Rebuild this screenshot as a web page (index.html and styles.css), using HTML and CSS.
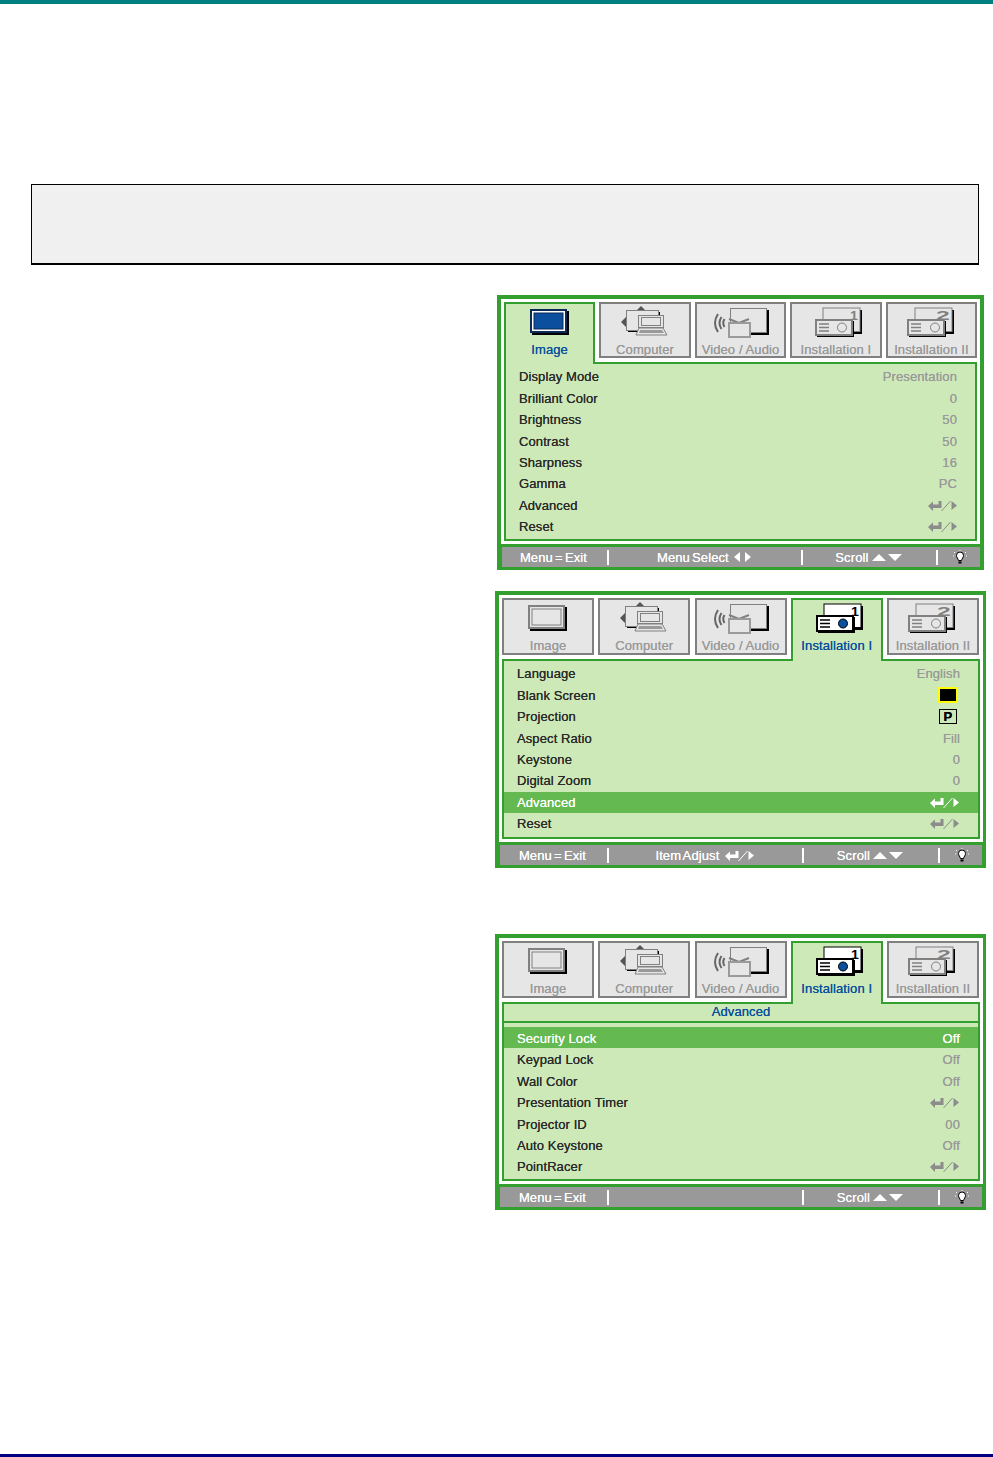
FILE: index.html
```html
<!DOCTYPE html>
<html lang="en">
<head>
<meta charset="utf-8">
<title>Projector OSD menus</title>
<link rel="stylesheet" href="styles.css">
</head>
<body>
<svg class="defs" aria-hidden="true">
  <symbol id="i-image" viewBox="2 2 88 38">
    <rect x="28" y="9" width="37" height="24" fill="#000"/>
    <rect class="ln" x="27" y="8" width="35" height="22"/>
    <rect class="scr" x="30" y="11" width="29" height="16"/>
  </symbol>
  <symbol id="i-computer" viewBox="2 2 88 38">
    <path class="sh" d="M38 8l4-4 4 4zM27 15v10l-5-5z"/>
    <rect x="29" y="10" width="32" height="20" fill="#000"/>
    <rect class="thin" x="27.500" y="8.500" width="32" height="20"/>
    <rect class="thin2" x="39.500" y="13.500" width="25" height="12"/>
    <rect class="thin" x="42.500" y="15.500" width="19" height="8"/>
    <path class="base" d="M40 26h24l4 7H37z"/>
    <path class="base2" d="M41 28h22l2 3H40z"/>
  </symbol>
  <symbol id="i-video" viewBox="2 2 88 38">
    <rect x="37" y="8" width="37" height="25" fill="#000"/>
    <rect class="thin" x="35.500" y="6.500" width="36" height="24"/>
    <path class="wave" d="M23 12q-6 9 0 18M26.500 15q-4 6 0 12M29.500 17q-2.500 4 0 8"/>
    <path class="ant" d="M34 17l10 4 10-4"/>
    <rect class="tv" x="34" y="21" width="21" height="14"/>
  </symbol>
  <symbol id="i-inst1" viewBox="2 2 88 38">
    <rect x="35" y="8" width="37" height="24" fill="#000"/>
    <rect class="thin" x="33" y="6" width="37" height="23.500"/>
    <text class="num" x="60" y="18" textLength="8" lengthAdjust="spacingAndGlyphs">1</text>
    <rect x="27" y="19" width="37" height="16" fill="#000"/>
    <rect class="box" x="26" y="18" width="36" height="15"/>
    <path class="bars" d="M29 22h10M29 25.500h10M29 29h10"/>
    <circle class="lens" cx="52" cy="25.500" r="4.500"/>
  </symbol>
  <symbol id="i-inst2" viewBox="2 2 88 38">
    <rect x="31" y="8" width="37" height="24" fill="#000"/>
    <rect class="thin" x="29" y="6" width="37" height="23.500"/>
    <text class="num" x="50" y="18" textLength="14" lengthAdjust="spacingAndGlyphs">2</text>
    <rect x="23" y="19" width="37" height="16" fill="#000"/>
    <rect class="box" x="22" y="18" width="36" height="15"/>
    <path class="bars" d="M25 22h10M25 25.500h10M25 29h10"/>
    <circle class="lens" cx="49" cy="25.500" r="4.500"/>
  </symbol>
  <symbol id="i-enter" viewBox="0 0 29 11">
    <path class="ef" d="M0 6l5-4.500v3h5.500V1h3v7H5v3zM23.500 1l5.500 4.500-5.500 4.500z"/>
    <path class="es" d="M13.500 11L22.500 1"/>
  </symbol>
  <symbol id="i-bulb" viewBox="0 0 14 16">
    <path d="M3.500 5.500a3.500 3.500 0 0 1 7 0c0 2-1.500 3-2 5h-3c-.5-2-2-3-2-5z" fill="#fff" stroke="#000" stroke-width="1"/>
    <path d="M5.500 11.500h3v2h-3z" fill="#000"/>
    <path d="M7 0v1M1 2l1 1M13 2l-1 1M0 6h1M13 6h1" stroke="#fff" stroke-width="1"/>
  </symbol>
</svg>

<div class="topbar"></div>
<div class="notice"></div>

<main class="menus">
  <section class="menu menu-a">
    <div class="tabs">
      <div class="tab active"><svg class="icon"><use href="#i-image"/></svg><span>Image</span></div>
      <div class="tab"><svg class="icon"><use href="#i-computer"/></svg><span>Computer</span></div>
      <div class="tab"><svg class="icon"><use href="#i-video"/></svg><span>Video / Audio</span></div>
      <div class="tab"><svg class="icon"><use href="#i-inst1"/></svg><span>Installation I</span></div>
      <div class="tab"><svg class="icon"><use href="#i-inst2"/></svg><span>Installation II</span></div>
    </div>
    <div class="panel">
      <div class="row"><span>Display Mode</span><span class="val">Presentation</span></div>
      <div class="row"><span>Brilliant Color</span><span class="val">0</span></div>
      <div class="row"><span>Brightness</span><span class="val">50</span></div>
      <div class="row"><span>Contrast</span><span class="val">50</span></div>
      <div class="row"><span>Sharpness</span><span class="val">16</span></div>
      <div class="row"><span>Gamma</span><span class="val">PC</span></div>
      <div class="row"><span>Advanced</span><svg class="enter"><use href="#i-enter"/></svg></div>
      <div class="row"><span>Reset</span><svg class="enter"><use href="#i-enter"/></svg></div>
    </div>
    <div class="foot">
      <div class="cell first">Menu = Exit</div>
      <div class="cell">Menu Select <span class="tri tri-l"></span><span class="tri tri-r"></span></div>
      <div class="cell">Scroll <span class="tri tri-u"></span><span class="tri tri-d"></span></div>
      <div class="cell last"><svg class="bulb"><use href="#i-bulb"/></svg></div>
    </div>
  </section>

  <section class="menu menu-b">
    <div class="tabs">
      <div class="tab"><svg class="icon"><use href="#i-image"/></svg><span>Image</span></div>
      <div class="tab"><svg class="icon"><use href="#i-computer"/></svg><span>Computer</span></div>
      <div class="tab"><svg class="icon"><use href="#i-video"/></svg><span>Video / Audio</span></div>
      <div class="tab active"><svg class="icon"><use href="#i-inst1"/></svg><span>Installation I</span></div>
      <div class="tab"><svg class="icon"><use href="#i-inst2"/></svg><span>Installation II</span></div>
    </div>
    <div class="panel">
      <div class="row"><span>Language</span><span class="val">English</span></div>
      <div class="row"><span>Blank Screen</span><span class="swatch"></span></div>
      <div class="row"><span>Projection</span><span class="pbox">P</span></div>
      <div class="row"><span>Aspect Ratio</span><span class="val">Fill</span></div>
      <div class="row"><span>Keystone</span><span class="val">0</span></div>
      <div class="row"><span>Digital Zoom</span><span class="val">0</span></div>
      <div class="row hot"><span>Advanced</span><svg class="enter"><use href="#i-enter"/></svg></div>
      <div class="row"><span>Reset</span><svg class="enter"><use href="#i-enter"/></svg></div>
    </div>
    <div class="foot">
      <div class="cell first">Menu = Exit</div>
      <div class="cell">Item Adjust <svg class="enter enter-foot"><use href="#i-enter"/></svg></div>
      <div class="cell">Scroll <span class="tri tri-u"></span><span class="tri tri-d"></span></div>
      <div class="cell last"><svg class="bulb"><use href="#i-bulb"/></svg></div>
    </div>
  </section>

  <section class="menu menu-c">
    <div class="tabs">
      <div class="tab"><svg class="icon"><use href="#i-image"/></svg><span>Image</span></div>
      <div class="tab"><svg class="icon"><use href="#i-computer"/></svg><span>Computer</span></div>
      <div class="tab"><svg class="icon"><use href="#i-video"/></svg><span>Video / Audio</span></div>
      <div class="tab active"><svg class="icon"><use href="#i-inst1"/></svg><span>Installation I</span></div>
      <div class="tab"><svg class="icon"><use href="#i-inst2"/></svg><span>Installation II</span></div>
    </div>
    <div class="panel">
      <div class="subhead">Advanced</div>
      <div class="row hot"><span>Security Lock</span><span class="val">Off</span></div>
      <div class="row"><span>Keypad Lock</span><span class="val">Off</span></div>
      <div class="row"><span>Wall Color</span><span class="val">Off</span></div>
      <div class="row"><span>Presentation Timer</span><svg class="enter"><use href="#i-enter"/></svg></div>
      <div class="row"><span>Projector ID</span><span class="val">00</span></div>
      <div class="row"><span>Auto Keystone</span><span class="val">Off</span></div>
      <div class="row"><span>PointRacer</span><svg class="enter"><use href="#i-enter"/></svg></div>
    </div>
    <div class="foot">
      <div class="cell first">Menu = Exit</div>
      <div class="cell"></div>
      <div class="cell">Scroll <span class="tri tri-u"></span><span class="tri tri-d"></span></div>
      <div class="cell last"><svg class="bulb"><use href="#i-bulb"/></svg></div>
    </div>
  </section>
</main>

<div class="bottombar"></div>
</body>
</html>
```
FILE: styles.css
```css
* { box-sizing: border-box; }
html, body { margin: 0; padding: 0; }
body {
  height: 1457px;
  display: flex;
  flex-direction: column;
  background: #fff;
  font-family: "Liberation Sans", Arial, sans-serif;
  overflow: hidden;
}
.defs { width: 0; height: 0; display: none; }

.topbar { height: 4px; background: #008080; flex: none; }
.bottombar { height: 3px; background: #000080; flex: none; margin-top: auto; }

.notice {
  flex: none;
  width: 948px;
  height: 81px;
  margin: 180px 0 0 31px;
  background: #f0f0f0;
  border: 1px solid #000;
  border-bottom-width: 2px;
}

.menus {
  display: flex;
  flex-direction: column;
  align-items: flex-end;
  padding-right: 7px;
}

.menu {
  --tab-h: 57px;
  --ln: #808080;
  --fill: #e6e6e6;
  --scr: #e6e6e6;
  --lens: #e6e6e6;
  --num: #808080;
  --tabs-right: 4px;
  --cols: 107px 195px 136px 1fr;
  width: 491px;
  border: solid #339f2e;
  border-width: 4px 3px 3px 4px;
  padding-top: 3px;
  background: #fff;
  font-size: 13px;
  letter-spacing: 0.1px;
  text-shadow: 0 0 0.4px currentColor;
}
.menu-a {
  --tab-h: 56px;
  --tabs-right: 3px;
  --cols: 105px 194px 135px 1fr;
  width: 487px;
  border-right-width: 4px;
  margin: 30px 2px 0 0;
}
.menu-b { margin-top: 21px; }
.menu-c { margin-top: 66px; }

.tabs {
  display: flex;
  align-items: flex-start;
  gap: 4.25px;
  margin: 0 var(--tabs-right) 0 3px;
}
.tab {
  flex: 1 1 0;
  min-width: 0;
  height: var(--tab-h);
  border: 2px solid #808080;
  background: #e6e6e6;
  color: #9a9a9a;
  text-align: center;
  white-space: nowrap;
  margin-bottom: 4px;
}
.tab.active {
  --ln: #000;
  --fill: #fff;
  --scr: #0b4f9e;
  --lens: #0b4f9e;
  --num: #000;
  height: calc(var(--tab-h) + 6px);
  margin-bottom: -2px;
  border: solid #339f2e;
  border-width: 2px 2px 0;
  background: #cde9b7;
  color: #0b4f9e;
  z-index: 1;
}
.menu-a .tab.active { --ln: #0b2a55; }
.icon { display: block; width: 88px; height: 38px; margin-bottom: 1px; overflow: visible; }
.tab span { display: block; line-height: 14px; }

/* icon parts */
.ln { fill: var(--fill); stroke: var(--ln); stroke-width: 2; }
.scr { fill: var(--scr); stroke: var(--ln); stroke-width: 1; }
.thin { fill: var(--fill); stroke: var(--ln); stroke-width: 1; }
.thin2 { fill: var(--fill); stroke: var(--ln); stroke-width: 1; }
.sh { fill: #555; }
.base { fill: var(--fill); stroke: var(--ln); stroke-width: 1; }
.base2 { fill: #9a9a9a; }
.wave { fill: none; stroke: #666; stroke-width: 2; }
.ant { fill: none; stroke: #808080; stroke-width: 2; }
.tv { fill: #e6e6e6; stroke: #9a9a9a; stroke-width: 2; }
.num { font: bold 13px "Liberation Sans", Arial, sans-serif; fill: var(--num); text-shadow: none; }
.box { fill: var(--fill); stroke: var(--ln); stroke-width: 2; }
.bars { fill: none; stroke: var(--ln); stroke-width: 1.5; }
.lens { fill: var(--lens); stroke: var(--ln); stroke-width: 1; }

.panel {
  border: 2px solid #339f2e;
  background: #cde9b7;
  margin: 0 3px;
  padding: 2.3px 0 1.5px;
  color: #2b2b2b;
}
.menu-b .panel { padding-bottom: 2.5px; }
.menu-c .panel { padding: 0 0 2.2px; }
.menu-c .row { padding-top: 2px; }
.subhead {
  height: 19px;
  line-height: 16px;
  border-bottom: 2px solid #339f2e;
  text-align: center;
  color: #0b4f9e;
  margin-bottom: 4px;
}
.row {
  display: flex;
  justify-content: space-between;
  align-items: center;
  height: 21.4px;
  padding: 0 18px 0 13px;
}
.val { color: #9a9a9a; }
.row.hot { background: #64b950; color: #fff; }
.row.hot .val { color: #fff; }

.enter { width: 29px; height: 11px; --ef: #8c8c8c; }
.menu-b .row .enter, .menu-c .row .enter { margin-right: 1px; }
.row.hot .enter, .enter-foot { --ef: #fff; }
.ef { fill: var(--ef); }
.es { fill: none; stroke: var(--ef); stroke-width: 1; }
.enter-foot { width: 29px; height: 11px; vertical-align: -1px; }

.swatch {
  width: 20px;
  height: 16px;
  margin-right: 2px;
  background: #000;
  border: 2px solid #ff0;
}
.pbox {
  width: 18px;
  height: 15px;
  margin-right: 3px;
  border: 1px solid #000;
  color: #000;
  font-size: 13px;
  font-weight: bold;
  line-height: 13px;
  text-align: center;
}

.foot {
  display: grid;
  grid-template-columns: var(--cols);
  height: 23px;
  margin: 3px 1px 0;
  border-top: 3px solid #339f2e;
  background: #999;
  color: #fff;
  box-shadow: -1px 0 0 #339f2e, 1px 0 0 #339f2e;
}
.menu-a .foot { margin-right: 0; }
.cell {
  display: flex;
  align-items: center;
  justify-content: center;
  gap: 3px;
  padding-top: 2px;
  white-space: pre;
  height: 20px;
  position: relative;
  word-spacing: -1.5px;
}
.cell + .cell::before {
  content: "";
  position: absolute;
  left: 0;
  top: 3px;
  bottom: 2px;
  width: 2px;
  background: #fff;
}
.first { padding-right: 2px; }
.last { padding-left: 3px; }

.tri { width: 0; height: 0; border-style: solid; border-color: transparent; }
.tri-l { border-width: 5px 6px 5px 0; border-right-color: #fff; margin-bottom: 2px; }
.tri-r { border-width: 5px 0 5px 6px; border-left-color: #fff; margin: 0 0 2px 2px; }
.tri-u { border-width: 0 7px 7px; border-bottom-color: #fff; margin-left: -2px; }
.tri-d { border-width: 7px 7px 0; border-top-color: #fff; margin-left: -1px; }
.bulb { width: 14px; height: 16px; }
```
